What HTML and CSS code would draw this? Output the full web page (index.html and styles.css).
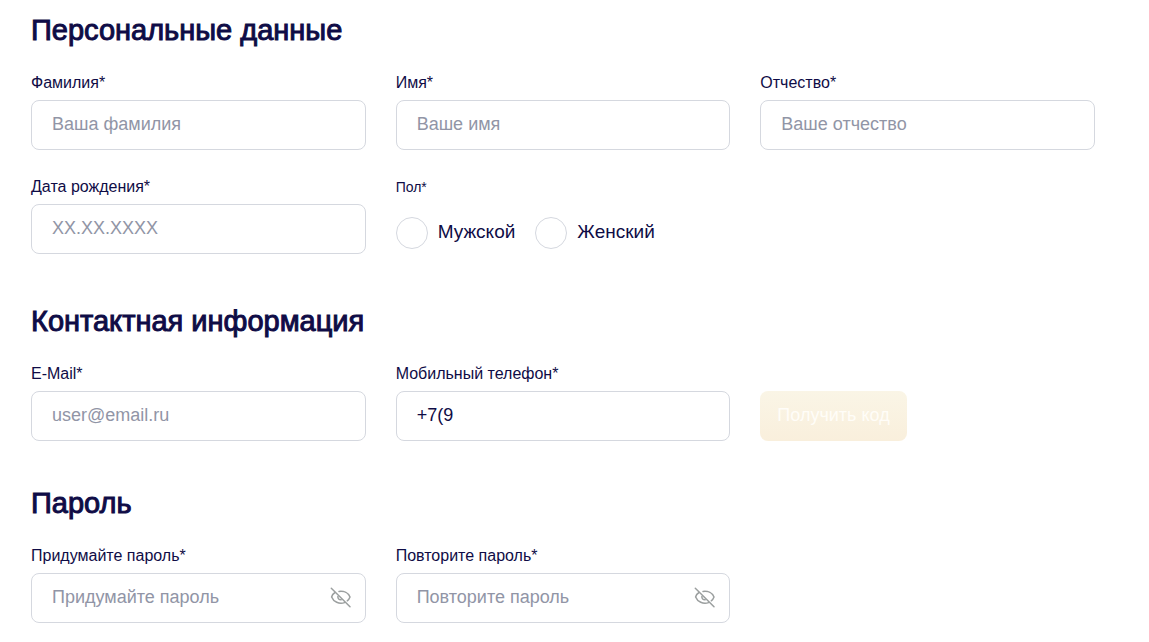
FILE: index.html
```html
<!DOCTYPE html>
<html lang="ru">
<head>
  <meta charset="UTF-8">
  <meta name="viewport" content="width=device-width, initial-scale=1">
  <title>Регистрация</title>
  <link rel="stylesheet" href="styles.css">
</head>
<body>
  <form class="form">
    <section class="section">
      <h2>Персональные данные</h2>
      <div class="grid">
        <div class="field">
          <label for="surname">Фамилия*</label>
          <input class="input" type="text" id="surname" placeholder="Ваша фамилия">
        </div>
        <div class="field">
          <label for="name">Имя*</label>
          <input class="input" type="text" id="name" placeholder="Ваше имя">
        </div>
        <div class="field">
          <label for="patronymic">Отчество*</label>
          <input class="input" type="text" id="patronymic" placeholder="Ваше отчество">
        </div>
        <div class="field">
          <label for="birthday">Дата рождения*</label>
          <input class="input" type="text" id="birthday" placeholder="XX.XX.XXXX">
        </div>
        <div class="field" role="radiogroup" aria-labelledby="gender-title">
          <span class="group-title" id="gender-title">Пол*</span>
          <div class="radios">
            <label class="radio"><input type="radio" name="gender" value="m"><span>Мужской</span></label>
            <label class="radio"><input type="radio" name="gender" value="f"><span>Женский</span></label>
          </div>
        </div>
      </div>
    </section>

    <section class="section">
      <h2>Контактная информация</h2>
      <div class="grid">
        <div class="field">
          <label for="email">E-Mail*</label>
          <input class="input" type="email" id="email" placeholder="user@email.ru">
        </div>
        <div class="field">
          <label for="phone">Мобильный телефон*</label>
          <input class="input" type="tel" id="phone" value="+7(9">
        </div>
        <div class="field field-button">
          <button class="btn" type="button" disabled>Получить код</button>
        </div>
      </div>
    </section>

    <section class="section">
      <h2>Пароль</h2>
      <div class="grid">
        <div class="field">
          <label for="password">Придумайте пароль*</label>
          <div class="password">
            <input class="input" type="password" id="password" placeholder="Придумайте пароль">
            <button class="toggle" type="button" aria-label="Показать пароль">
              <svg width="22" height="22" viewBox="0 0 22 22">
                <path d="M1.3 1.2L20 19.8"/>
                <path d="M9 4.4C14 3.8 18.5 6 20 10C19.4 11.6 18.6 12.8 17.3 13.8"/>
                <path d="M5 5.5C3.2 6.6 2 8.2 1.6 10C3.5 14.8 9 17.4 14.6 15.6"/>
                <path d="M7.9 9.4C7.6 11.6 9.2 13 11.2 12.8"/>
              </svg>
            </button>
          </div>
        </div>
        <div class="field">
          <label for="password2">Повторите пароль*</label>
          <div class="password">
            <input class="input" type="password" id="password2" placeholder="Повторите пароль">
            <button class="toggle" type="button" aria-label="Показать пароль">
              <svg width="22" height="22" viewBox="0 0 22 22">
                <path d="M1.3 1.2L20 19.8"/>
                <path d="M9 4.4C14 3.8 18.5 6 20 10C19.4 11.6 18.6 12.8 17.3 13.8"/>
                <path d="M5 5.5C3.2 6.6 2 8.2 1.6 10C3.5 14.8 9 17.4 14.6 15.6"/>
                <path d="M7.9 9.4C7.6 11.6 9.2 13 11.2 12.8"/>
              </svg>
            </button>
          </div>
        </div>
      </div>
    </section>
  </form>
</body>
</html>
```
FILE: styles.css
```css
* {
  box-sizing: border-box;
}
body {
  margin: 0;
  background-color: #fff;
  color: #0f0c46;
  font-family: "Liberation Sans", Arial, sans-serif;
  font-size: 16px;
}
.form {
  padding: 14px 54px 18px 31px;
}
.section + .section {
  margin-top: 46px;
}
/* medium weight: regular face thickened with a stroke */
h2 {
  margin: 0 0 27px;
  font-size: 29px;
  line-height: 32px;
  font-weight: normal;
  -webkit-text-stroke: 1px #0f0c46;
}
.grid {
  display: grid;
  grid-template-columns: repeat(3, 1fr);
  gap: 27px 30px;
}
.field {
  display: flex;
  flex-direction: column;
  gap: 7px;
  line-height: 20px;
}
.group-title {
  font-size: 14px;
}
.input {
  width: 100%;
  height: 50px;
  padding: 0 20px 2px;
  border: 1px solid #d5d8df;
  border-radius: 8px;
  background-color: #fff;
  color: #0f0c46;
  font-family: inherit;
  font-size: 18px;
}
.input::placeholder {
  color: #9195a6;
  opacity: 1;
}
.radios {
  display: flex;
  gap: 20px;
  padding: 13px 0 10px;
}
.radio {
  display: flex;
  align-items: center;
  gap: 10px;
  font-size: 19px;
}
.radio span {
  padding-bottom: 3px;
}
.radio input {
  appearance: none;
  width: 32px;
  height: 32px;
  margin: 0;
  border: 1px solid #d5d8df;
  border-radius: 50%;
}
.radio input:checked {
  border: 10px solid #0f0c46;
}
.field-button {
  align-items: flex-start;
  justify-content: flex-end;
}
.btn {
  height: 50px;
  padding: 0 17px 2px;
  border: 0;
  border-radius: 8px;
  background: linear-gradient(#faf5e6, #f9efdc);
  color: #fffdf8;
  font-family: inherit;
  font-size: 18px;
}
.password {
  position: relative;
}
.password .input {
  padding-right: 50px;
}
/* eye button over the right end of the input */
.toggle {
  position: absolute;
  top: 14px;
  right: 14px;
  padding: 0;
  border: 0;
  background: none;
  cursor: pointer;
}
.toggle svg {
  display: block;
  fill: none;
  stroke: #9b9f9f;
  stroke-width: 1.5;
  stroke-linecap: round;
}
```
